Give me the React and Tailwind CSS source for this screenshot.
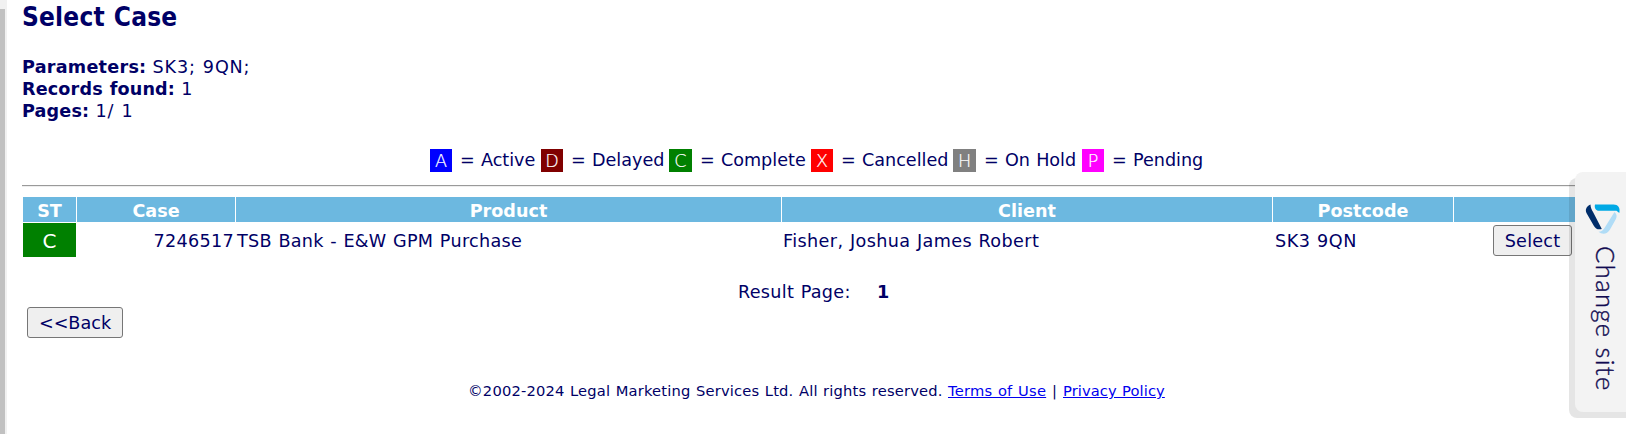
const legend = [
  { code: 'A', label: 'Active', box: 'bg-[#0000ff] w-[22px]', cell: 'w-[111px]' },
  { code: 'D', label: 'Delayed', box: 'bg-[#800000] w-[22px]', cell: 'w-[128px]' },
  { code: 'C', label: 'Complete', box: 'bg-[#008000] w-[23px]', cell: 'w-[142px]' },
  { code: 'X', label: 'Cancelled', box: 'bg-[#ff0000] w-[22px]', cell: 'w-[142px]' },
  { code: 'H', label: 'On Hold', box: 'bg-[#808080] w-[23px]', cell: 'w-[129px]' },
  { code: 'P', label: 'Pending', box: 'bg-[#ff00ff] w-[22px]', cell: 'w-[124px]' },
];

const columns = 'grid grid-cols-[53px_158px_545px_490px_180px_150px] gap-x-px';

function Logo() {
  return (
    <svg width="36" height="32" viewBox="0 0 36 32" fill="none">
      <path d="M10 1.500H28.500c4.500 0 7 3 5.800 8.500L31.500 7.800H14C11 7.800 9 5 10 1.500Z" fill="#00a9e5" />
      <path d="M5.500 1.500C1 3.500 0 7 1.600 10.200l7.200 12.500c1.800 3.200 4.200 4.300 8 3.300L8.300 9.500C6.600 6.500 5.500 4.500 5.500 1.500Z" fill="#002d6a" />
      <path d="M29.500 9c2.800 2.500 2.500 5.200 1 7.700L25 26.500c-2.800 4.800-7.500 5.500-11.500 2.300 3-.100 4.500-1.200 6-3.700L29.500 9Z" fill="#b0dcf6" />
    </svg>
  );
}

export default function App() {
  return (
    <div className="relative flex h-[434px] w-[1626px] overflow-hidden bg-white font-['DejaVu_Sans',Verdana,sans-serif] text-[17.6px] leading-[22px] text-[#000066] [word-spacing:0.6px]">
      <div className="w-[7px] shrink-0 bg-[#f1f1f1] pt-[9px]">
        <div className="h-full w-[5px] bg-[#c1c1c1]" />
      </div>
      <main className="w-[1619px] shrink-0 pl-[15px]">
        <h1 className="h-[56px] font-['DejaVu_Sans_Condensed','DejaVu_Sans',sans-serif] text-[26px] font-bold leading-[34px] tracking-[0.2px]">Select Case</h1>
        <div className="h-[93px]">
          <p><b className="tracking-[0.25px]">Parameters:</b> <span className="tracking-[0.85px]">SK3; 9QN;</span></p>
          <p><b className="tracking-[0.15px]">Records found:</b> 1</p>
          <p><b className="tracking-[0.15px]">Pages:</b> <span className="tracking-[0.9px]">1/ 1</span></p>
        </div>
        <div className="flex h-[36px] pl-[408px]">
          {legend.map((item) => (
            <div key={item.code} className={`flex shrink-0 whitespace-nowrap ${item.cell}`}>
              <span className={`flex h-[23px] items-center justify-center font-extralight text-white [-webkit-text-stroke:0.2px_white] ${item.box}`}>{item.code}</span>
              <span className="pl-[8px]">= {item.label}</span>
            </div>
          ))}
        </div>
        <div className="h-[2px] border-t border-[#9a9a9a] bg-[#eeeeee]" />
        <div className="pl-px pt-[10px]">
          <div className={`${columns} grid-rows-[25px] text-center font-bold leading-[28px] text-white`}>
            {['ST', 'Case', 'Product', 'Client', 'Postcode', ''].map((name, i) => (
              <div key={i} className="h-[25px] bg-[#6cb8e0]">{name}</div>
            ))}
          </div>
          <div className={`${columns} mt-px h-[34px] grid-rows-[34px] leading-[36px]`}>
            <div className="bg-[#008000] text-center text-[20px] text-white">C</div>
            <div className="pr-px text-right tracking-[0.3px]">7246517</div>
            <div className="pl-px tracking-[0.3px]">TSB Bank - E&amp;W GPM Purchase</div>
            <div className="pl-px tracking-[0.38px]">Fisher, Joshua James Robert</div>
            <div className="pl-[2px] tracking-[0.5px]">SK3 9QN</div>
            <div className="pl-[39px] pt-[2px]">
              <button className="block h-[31px] w-[79px] rounded-[3px] border border-[#767676] bg-[#efefef] leading-[30px] tracking-[0.2px]">Select</button>
            </div>
          </div>
        </div>
        <div className="flex h-[50px] pl-[716px] pt-[24px]">
          <span className="w-[139px] tracking-[0.3px]">Result Page:</span>
          <b>1</b>
        </div>
        <div className="h-[74px] pl-[5px]">
          <button className="block h-[31px] w-[96px] rounded-[3px] border border-[#767676] bg-[#efefef] leading-[30px]">&lt;&lt;Back</button>
        </div>
        <footer className="flex whitespace-nowrap pl-[446px] text-[14.7px] leading-[20px]">
          <span className="w-[480px] tracking-[0.18px]">©2002-2024 Legal Marketing Services Ltd. All rights reserved.</span>
          <a className="w-[104px] text-[#0000ee]" href="#terms"><span className="tracking-[0.23px] underline">Terms of Use</span></a>
          <span className="w-[11px]">|</span>
          <a className="tracking-[0.08px] text-[#0000ee] underline" href="#privacy">Privacy Policy</a>
        </footer>
      </main>
      <aside className="absolute right-0 top-[172px] h-[246px] w-[57px] pl-[6px]">
        <div className="absolute bottom-0 left-0 top-[6px] w-[57px] rounded-l-[8px] bg-black/10" />
        <div className="relative flex h-[240px] w-[51px] flex-col items-start rounded-l-[8px] bg-[#f3f3f3] pl-[10px] pt-[31px]">
          <Logo />
          <span className="mt-[11px] whitespace-nowrap pl-[6px] font-['Lato',sans-serif] text-[25.5px] font-light leading-[30px] tracking-[1.45px] text-[#100a50] [-webkit-text-stroke:0.4px_#100a50] [writing-mode:vertical-rl]">Change site</span>
        </div>
      </aside>
    </div>
  );
}
